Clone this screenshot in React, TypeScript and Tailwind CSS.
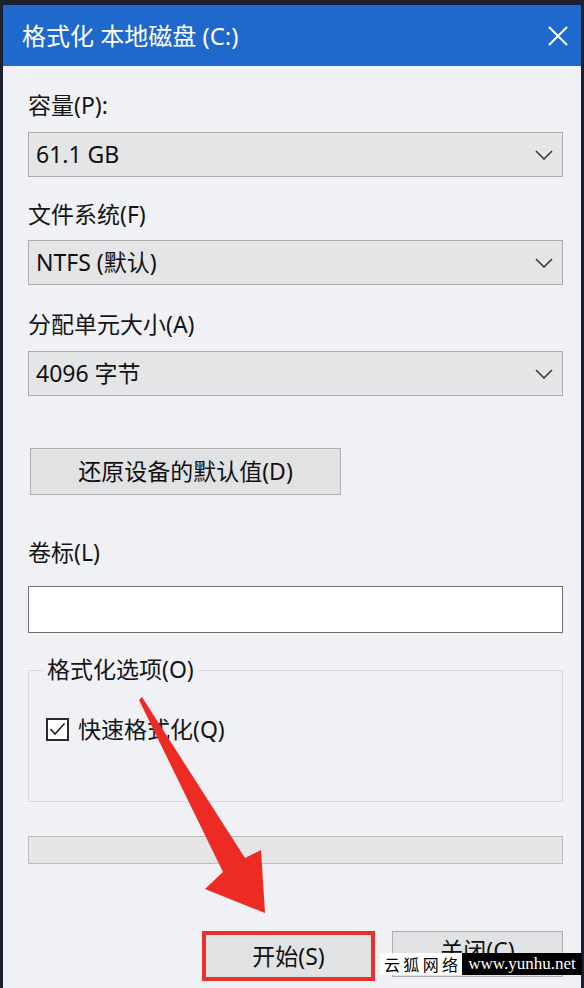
import React from "react";

const font = { fontFamily: "'Noto Sans', 'Noto Sans CJK SC', sans-serif" };

function Chevron() {
  return (
    <svg width="18" height="10" viewBox="0 0 18 10" className="shrink-0">
      <polyline points="1,1 9,9 17,1" fill="none" stroke="#3a3a3a" strokeWidth="1.6" />
    </svg>
  );
}

function Dropdown({ value }: { value: string }) {
  return (
    <div className="h-[45px] w-[535px] bg-[#e4e5e6] border border-[#adadad] flex items-center pl-[7px] pr-[9px] justify-between">
      <span className="text-[23px] text-[#111] leading-none">{value}</span>
      <Chevron />
    </div>
  );
}

function Label({ children, mt }: { children: React.ReactNode; mt: string }) {
  return <div className={`h-[28px] leading-[28px] text-[23px] text-[#151515] ${mt}`}>{children}</div>;
}

export default function App() {
  return (
    <div className="w-[584px] h-[988px] bg-[#1a2030] pt-[5px] pl-[3px] pr-[3px] relative overflow-hidden" style={font}>
      <div className="h-[61px] bg-[#1f68cc] flex items-center justify-between pl-[19px] pr-[13px]">
        <span className="text-white text-[24px] leading-none">格式化 本地磁盘 (C:)</span>
        <svg width="20" height="20" viewBox="0 0 20 20">
          <path d="M1 1 L19 19 M19 1 L1 19" stroke="#ffffff" strokeWidth="2" />
        </svg>
      </div>
      <div className="h-[922px] bg-[#eff1f4] pl-[25px] flex flex-col">
        <Label mt="mt-[25px]">容量(P):</Label>
        <div className="mt-[13px]"><Dropdown value="61.1 GB" /></div>
        <Label mt="mt-[23px]">文件系统(F)</Label>
        <div className="mt-[12px]"><Dropdown value="NTFS (默认)" /></div>
        <Label mt="mt-[25px]">分配单元大小(A)</Label>
        <div className="mt-[13px]"><Dropdown value="4096 字节" /></div>
        <div className="mt-[52px] ml-[2px] h-[47px] w-[311px] bg-[#e1e2e3] border border-[#adadad] flex items-center justify-center text-[23px] text-[#111]">
          还原设备的默认值(D)
        </div>
        <Label mt="mt-[43px]">卷标(L)</Label>
        <div className="mt-[20px] h-[47px] w-[535px] bg-white border border-[#6f6f6f]" />
        <div className="mt-[37px] h-[132px] w-[535px] border border-[#d8dadc] relative">
          <span className="absolute left-[14px] top-[-16px] bg-[#eff1f4] px-[4px] text-[23px] leading-[28px] text-[#151515]">
            格式化选项(O)
          </span>
          <div className="mt-[44px] ml-[17px] flex items-center gap-[9px]">
            <div className="w-[23px] h-[23px] border-2 border-[#2a2a2a] bg-white flex items-center justify-center">
              <svg width="17" height="14" viewBox="0 0 17 14">
                <polyline points="1.5,7 6,12 15.5,1.5" fill="none" stroke="#222" strokeWidth="1.6" />
              </svg>
            </div>
            <span className="text-[23px] leading-[28px] text-[#151515]">快速格式化(Q)</span>
          </div>
        </div>
        <div className="mt-[34px] h-[28px] w-[535px] bg-[#e6e6e6] border border-[#bcbcbc]" />
        <div className="mt-[67px] flex items-start">
          <div className="ml-[174px] h-[50px] w-[173px] border-[4px] border-[#e5322d] bg-[#e1e2e3] flex items-center justify-center text-[23px] text-[#111]">
            开始(S)
          </div>
          <div className="ml-[17px] h-[46px] w-[171px] bg-[#e1e2e3] border border-[#adadad] flex items-start justify-center pt-[4px] text-[23px] leading-[28px] text-[#111]">
            关闭(C)
          </div>
        </div>
      </div>

      <svg className="absolute left-0 top-0 pointer-events-none" width="584" height="988" viewBox="0 0 584 988">
        <polygon
          points="139,700 142,697 245,858 261,850 265,913 205,889 223,872"
          fill="#ee2a24"
        />
      </svg>

      <div className="absolute left-[380px] top-[953px] h-[22px] flex">
        <div
          className="w-[82px] bg-white flex items-center justify-between px-[4px] text-[16px] leading-none text-black"
          style={{ fontFamily: "'Noto Sans CJK SC', serif" }}
        >
          <span>云</span>
          <span>狐</span>
          <span>网</span>
          <span>络</span>
        </div>
        <div className="w-[120px] bg-black flex items-center justify-center text-[17px] text-white" style={{ fontFamily: "'Liberation Serif', serif" }}>
          www.yunhu.net
        </div>
      </div>
    </div>
  );
}
